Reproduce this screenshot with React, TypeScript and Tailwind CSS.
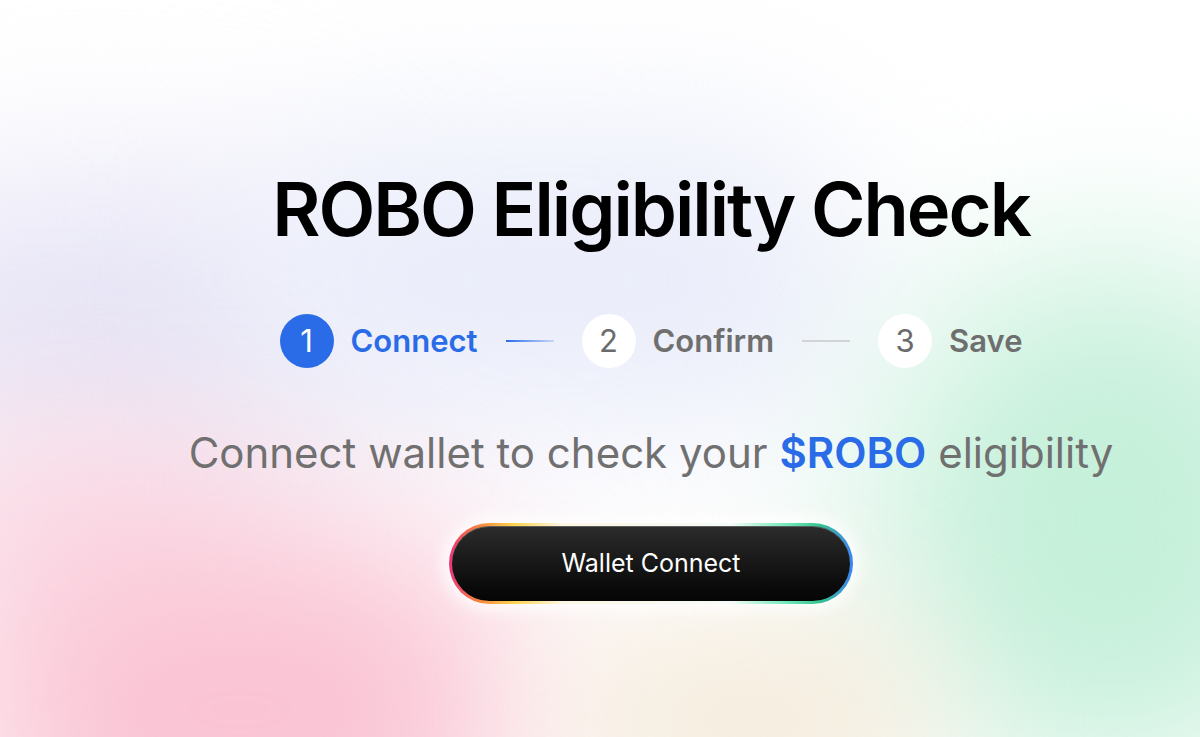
import React from 'react';

const font = { fontFamily: 'Inter, "Noto Sans", Arial, sans-serif' };

type StepProps = { n: number; label: string; active?: boolean };

function Step({ n, label, active }: StepProps) {
  return (
    <div className="flex items-center gap-[17px]">
      <div
        className={
          'flex h-[54px] w-[54px] items-center justify-center rounded-full text-[31px] font-normal ' +
          (active ? 'bg-[#2a6be7] text-white' : 'bg-white text-[#6b6b6b]')
        }
      >
        {n}
      </div>
      <span className={'text-[31px] font-semibold ' + (active ? 'text-[#2a6be7]' : 'text-[#6f6f6f]')}>{label}</span>
    </div>
  );
}

export default function App() {
  return (
    <div className="relative h-[737px] w-[1200px] overflow-hidden bg-white" style={font}>
      {/* soft colour blobs behind the content */}
      <div className="pointer-events-none absolute inset-0">
        <div className="absolute left-[-140px] top-[180px] h-[300px] w-[480px] rounded-full bg-[#e6e4f6] blur-[90px]" />
        <div className="absolute left-[240px] top-[130px] h-[300px] w-[620px] rounded-full bg-[#eaedfa] blur-[80px]" />
        <div className="absolute left-[-120px] top-[420px] h-[200px] w-[360px] rounded-full bg-[#fbe0ea] blur-[80px]" />
        <div className="absolute left-[-40px] top-[520px] h-[380px] w-[560px] rounded-full bg-[#fac3d3] blur-[90px]" />
        <div className="absolute left-[880px] top-[260px] h-[520px] w-[460px] rounded-full bg-[#c5f0da] blur-[90px]" />
        <div className="absolute left-[560px] top-[610px] h-[220px] w-[380px] rounded-full bg-[#f5ecdd] blur-[70px]" />
      </div>

      <div className="relative flex flex-col items-center pl-[102px] pt-[172px]">
        <h1 className="text-[74px] font-semibold leading-none tracking-[-2px] text-black">ROBO Eligibility Check</h1>

        <div className="mt-[68px] flex items-center">
          <Step n={1} label="Connect" active />
          <div className="mx-[28px] h-[2px] w-[48px] bg-gradient-to-r from-[#2a6be7] to-[#c9d6f3]" />
          <Step n={2} label="Confirm" />
          <div className="mx-[28px] h-[2px] w-[48px] bg-[#d2d4d6]" />
          <Step n={3} label="Save" />
        </div>

        <p className="mt-[64px] text-[42px] font-normal leading-none text-[#707070]">
          Connect wallet to check your <span className="font-semibold text-[#2a6be7]">$ROBO</span> eligibility
        </p>

        <div className="mt-[49px] rounded-full bg-[linear-gradient(90deg,#e8357a_0%,#f7833c_7%,#fcd34d_16%,#fdf6e4_28%,#f4fbf7_70%,#6ee7b7_84%,#34c38f_92%,#3b82f6_100%)] p-[3px] shadow-[0_0_16px_6px_rgba(255,255,255,0.85)]">
          <button className="flex h-[75px] w-[398px] items-center justify-center rounded-full border-t border-[#5a5a5a] bg-gradient-to-b from-[#2c2c2c] to-[#050505] text-[25px] font-normal text-white">
            Wallet Connect
          </button>
        </div>
      </div>
    </div>
  );
}
